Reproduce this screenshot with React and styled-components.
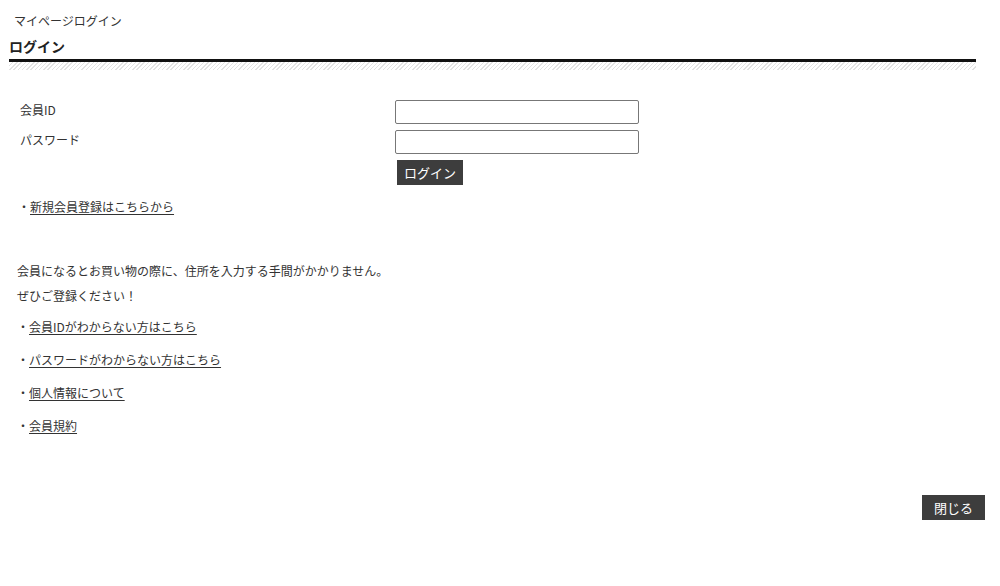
import React from "react";
import styled, { createGlobalStyle } from "styled-components";

const Global = createGlobalStyle`
  html, body { margin: 0; padding: 0; background: #fff; }
  body {
    font-family: "Noto Sans CJK JP", "Noto Sans", sans-serif;
    font-size: 12px;
    color: #333;
  }
`;

const Page = styled.div`
  width: 1000px;
  height: 586px;
  box-sizing: border-box;
  display: flex;
  flex-direction: column;
  padding: 12px 15px 0 9px;
`;

const Breadcrumb = styled.div`
  padding-left: 5px;
  font-size: 12px;
  line-height: 18px;
  color: #333;
`;

const Heading = styled.h1`
  margin: 6px 9px 0 0;
  font-size: 14px;
  font-weight: bold;
  line-height: 20px;
  color: #222;
  padding-bottom: 3px;
  border-bottom: 3px solid #111;
`;

const Hatch = styled.div`
  margin-right: 9px;
  height: 8px;
  background: repeating-linear-gradient(
    -45deg,
    #fff 0px,
    #fff 2px,
    #e2e2e2 2px,
    #e2e2e2 3px
  );
`;

const Form = styled.div`
  display: grid;
  grid-template-columns: 375px 244px;
  row-gap: 6px;
  margin-top: 30px;
  padding-left: 11px;
`;

const Label = styled.div`
  line-height: 18px;
  padding-top: 1px;
`;

const Input = styled.input`
  box-sizing: border-box;
  width: 244px;
  height: 24px;
  border: 1px solid #777;
  border-radius: 2px;
  padding: 2px 4px;
  font: inherit;
`;

const DarkButton = styled.button`
  background: #3d3d3d;
  color: #fff;
  border: none;
  border-radius: 0;
  font-family: "Noto Sans CJK JP", sans-serif;
  font-size: 13px;
  line-height: 25px;
  height: 25px;
  padding: 0 ${(p) => p.$px || 7}px;
  cursor: pointer;
`;

const LoginCell = styled.div`
  grid-column: 2;
  padding-left: 2px;
`;

const LinkLine = styled.div`
  padding-left: ${(p) => p.$indent || 8}px;
  line-height: 18px;
  margin-top: ${(p) => p.$mt || 0}px;
`;

const A = styled.a`
  color: #333;
  text-decoration: underline;
  text-underline-offset: 2px;
`;

const Para = styled.p`
  margin: 42px 0 0 8px;
  line-height: 25px;
`;

const CloseRow = styled.div`
  display: flex;
  justify-content: flex-end;
  margin-top: 60px;
`;

export default function App() {
  return (
    <>
      <Global />
      <Page>
        <Breadcrumb>マイページログイン</Breadcrumb>
        <Heading>ログイン</Heading>
        <Hatch />
        <Form>
          <Label>会員ID</Label>
          <Input type="text" />
          <Label>パスワード</Label>
          <Input type="password" />
          <LoginCell>
            <DarkButton>ログイン</DarkButton>
          </LoginCell>
        </Form>
        <LinkLine $indent={9} $mt={13}>
          ・<A href="#">新規会員登録はこちらから</A>
        </LinkLine>
        <Para>
          会員になるとお買い物の際に、住所を入力する手間がかかりません。
          <br />
          ぜひご登録ください！
        </Para>
        <LinkLine $mt={10}>
          ・<A href="#">会員IDがわからない方はこちら</A>
        </LinkLine>
        <LinkLine $mt={15}>
          ・<A href="#">パスワードがわからない方はこちら</A>
        </LinkLine>
        <LinkLine $mt={15}>
          ・<A href="#">個人情報について</A>
        </LinkLine>
        <LinkLine $mt={15}>
          ・<A href="#">会員規約</A>
        </LinkLine>
        <CloseRow>
          <DarkButton $px={12}>閉じる</DarkButton>
        </CloseRow>
      </Page>
    </>
  );
}
